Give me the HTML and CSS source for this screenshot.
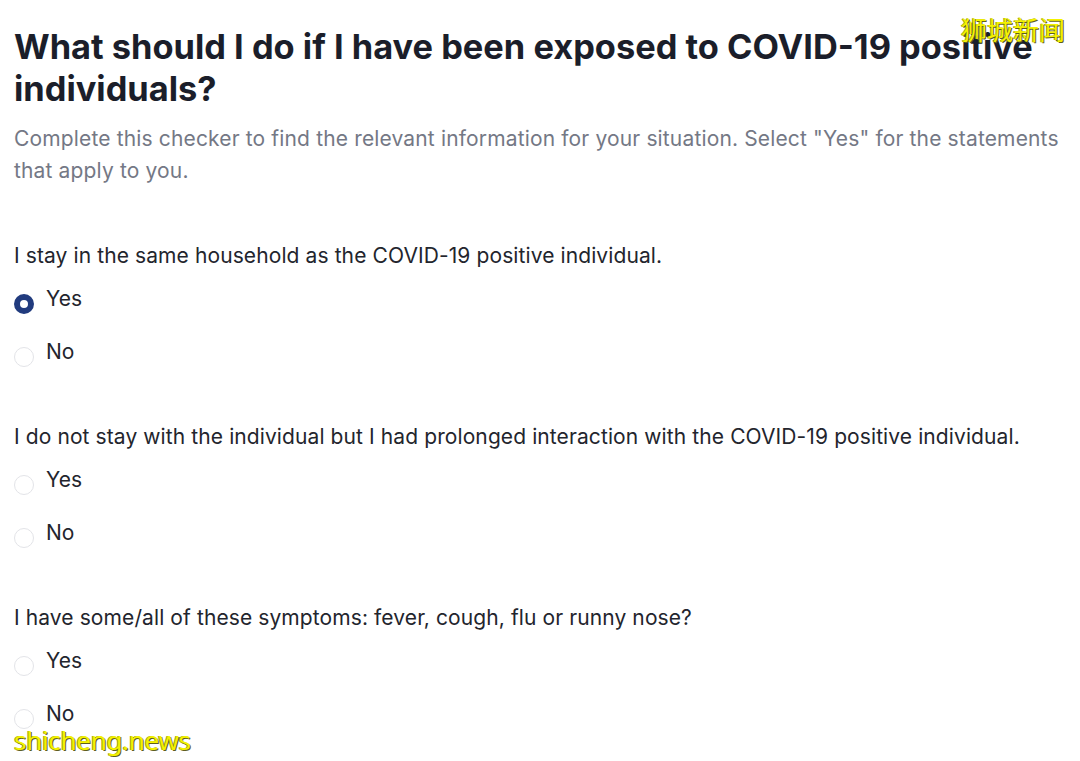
FILE: index.html
```html
<!DOCTYPE html>
<html lang="en">
<head>
<meta charset="utf-8">
<title>COVID-19 exposure checker</title>
<link rel="stylesheet" href="styles.css">
</head>
<body>
<main class="page">
  <h1 class="title">What should I do if I have been exposed to COVID-19 positive individuals?</h1>
  <p class="subtitle">Complete this checker to find the relevant information for your situation. Select "Yes" for the statements that apply to you.</p>

  <section class="question">
    <p class="question-text">I stay in the same household as the COVID-19 positive individual.</p>
    <div class="option"><span class="radio radio-on"></span><span class="option-label">Yes</span></div>
    <div class="option"><span class="radio"></span><span class="option-label">No</span></div>
  </section>

  <section class="question">
    <p class="question-text">I do not stay with the individual but I had prolonged interaction with the COVID-19 positive individual.</p>
    <div class="option"><span class="radio"></span><span class="option-label">Yes</span></div>
    <div class="option"><span class="radio"></span><span class="option-label">No</span></div>
  </section>

  <section class="question">
    <p class="question-text">I have some/all of these symptoms: fever, cough, flu or runny nose?</p>
    <div class="option"><span class="radio"></span><span class="option-label">Yes</span></div>
    <div class="option"><span class="radio"></span><span class="option-label">No</span></div>
  </section>
</main>
<div class="wm wm-top">狮城新闻</div>
<div class="wm wm-bottom">shicheng.news</div>
</body>
</html>
```

FILE: styles.css
```css
html, body {
  margin: 0;
  padding: 0;
  background: #ffffff;
  overflow: hidden;
}
body {
  font-family: Inter, "Noto Sans", sans-serif;
  width: 1080px;
  height: 761px;
  position: relative;
}
.page {
  padding: 26px 0 0 14px;
  width: 1062px;
}
.title {
  margin: 0;
  font-size: 34.4px;
  line-height: 42px;
  font-weight: 700;
  color: #1b1e2a;
}
.subtitle {
  margin: 13px 0 0 0;
  font-size: 21px;
  line-height: 32px;
  letter-spacing: 0.15px;
  color: #747885;
}
.question {
  margin-top: 55px;
}
.question + .question {
  margin-top: 57px;
}
.question-text {
  margin: 0;
  font-size: 21px;
  line-height: 28px;
  letter-spacing: 0.1px;
  color: #23252d;
}
.option {
  display: flex;
  align-items: flex-start;
  gap: 12px;
  height: 28px;
  margin-top: 25px;
}
.question-text + .option {
  margin-top: 15px;
}
.radio {
  box-sizing: border-box;
  width: 20px;
  height: 20px;
  margin-top: 9px;
  border-radius: 50%;
  border: 1.5px solid #e3e4e8;
  background: #fff;
  flex: none;
}
.radio-on {
  border: 6.5px solid #213b7e;
}
.option-label {
  font-size: 21px;
  line-height: 28px;
  color: #23252d;
}
.wm {
  position: absolute;
  color: #f4f200;
  text-shadow: 1px 1px 0 #5f5e1c, -1px 0 0 #a3a120;
}
.wm-top {
  top: 12px;
  left: 961px;
  font-size: 26px;
  line-height: 34px;
  font-family: "Noto Sans CJK SC", sans-serif;
}
.wm-bottom {
  top: 728px;
  left: 14px;
  font-size: 26px;
  line-height: 24px;
  font-family: "Noto Sans", sans-serif;
  letter-spacing: -0.3px;
}
```
